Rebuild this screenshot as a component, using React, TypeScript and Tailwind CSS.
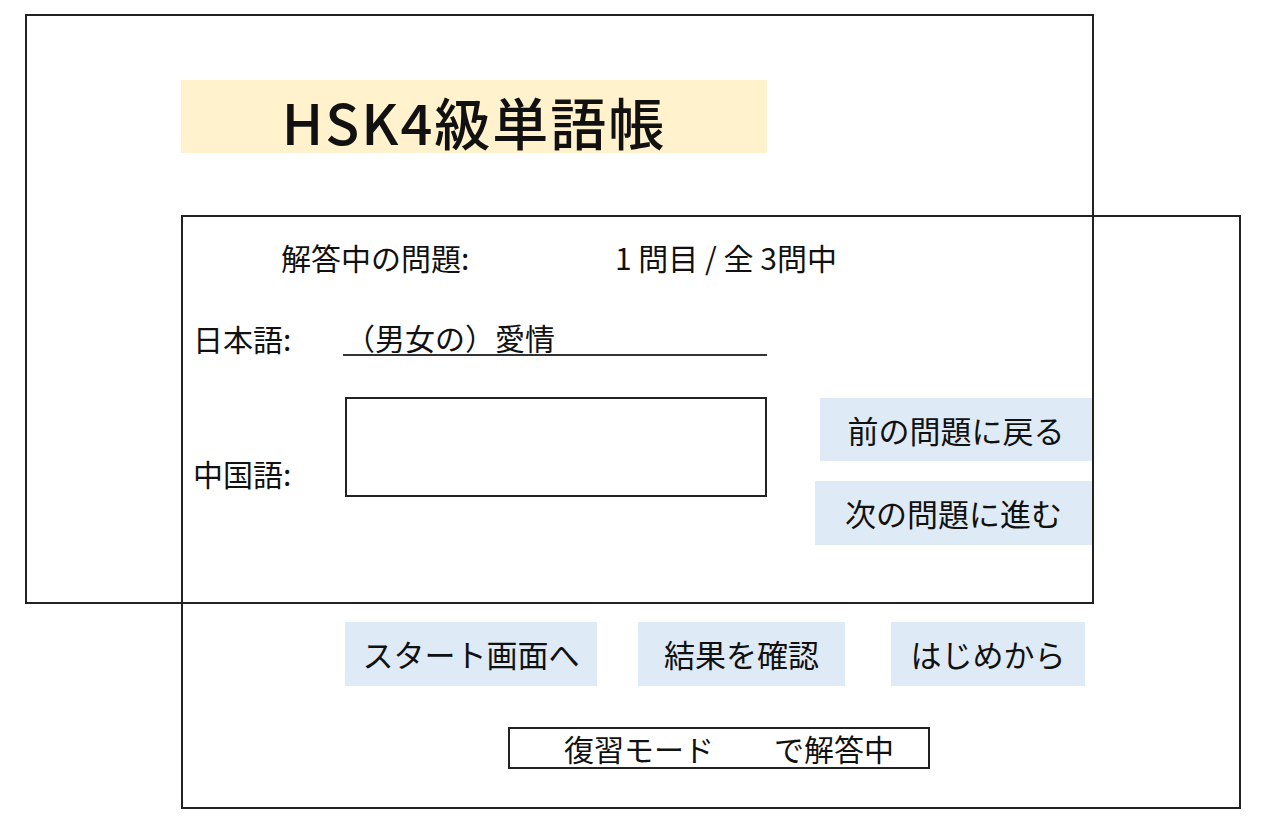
const jp = "font-['Noto_Sans_CJK_JP',sans-serif]";

function Btn({ label, className }: { label: string; className: string }) {
  return (
    <div className={`flex items-center justify-center bg-[#deeaf6] text-[31px] text-[#111] ${className}`}>
      {label}
    </div>
  );
}

export default function App() {
  return (
    <div className={`relative w-[1280px] h-[835px] bg-white overflow-hidden ${jp}`}>
      {/* start screen window */}
      <div className="absolute left-[25px] top-[14px] w-[1069px] h-[590px] border-2 border-[#222]">
        <div className="ml-[154px] mt-[64px] w-[586px] h-[73px] bg-[#fff2cc] flex items-center justify-center pt-[8px]">
          <span className="text-[56px] font-medium tracking-[2px] text-[#111] leading-none">HSK4級単語帳</span>
        </div>
      </div>

      {/* quiz window */}
      <div className="absolute left-[181px] top-[215px] w-[1060px] h-[594px] border-2 border-[#222] text-[30px] text-[#111] leading-[1.2]">
        <div className="mt-[21px] h-[38px] flex items-center">
          <span className="ml-[98px] w-[334px]">解答中の問題:</span>
          <span>1 問目 / 全 3問中</span>
        </div>

        <div className="mt-[44px] h-[36px] flex items-center">
          <span className="w-[160px] pl-[10px]">日本語:</span>
          <div className="w-[424px] h-full flex items-center pl-[2px] border-b-2 border-[#333]">（男女の）愛情</div>
        </div>

        <div className="mt-[41px] h-[148px] flex">
          <span className="w-[162px] pl-[10px] mt-[58px] h-[38px]">中国語:</span>
          <div className="w-[422px] h-[100px] border-2 border-[#222]" />
          <div className="ml-[48px] w-[277px] flex flex-col items-end">
            <Btn label="前の問題に戻る" className="mt-[1px] w-[272px] h-[63px]" />
            <Btn label="次の問題に進む" className="mt-[20px] w-[277px] h-[64px]" />
          </div>
        </div>

        <div className="mt-[77px] h-[64px] flex">
          <Btn label="スタート画面へ" className="ml-[162px] w-[252px]" />
          <Btn label="結果を確認" className="ml-[41px] w-[207px]" />
          <Btn label="はじめから" className="ml-[46px] w-[194px]" />
        </div>

        <div className="mt-[41px] ml-[325px] w-[422px] h-[42px] border-2 border-[#222] flex items-center pl-[54px]">
          復習モード　　で解答中
        </div>
      </div>
    </div>
  );
}
